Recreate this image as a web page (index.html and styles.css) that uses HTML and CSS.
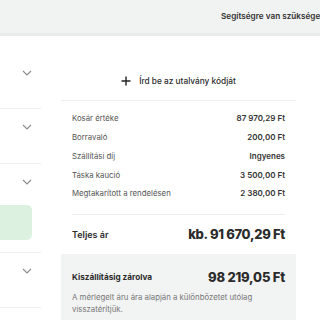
FILE: index.html
```html
<!DOCTYPE html>
<html lang="hu">
<head>
  <meta charset="UTF-8" />
  <title>Kosár</title>
  <meta name="viewport" content="width=device-width, initial-scale=1.0" />
  <link rel="stylesheet" href="styles.css">
</head>
<body>

  <header class="topbar">
    <span class="help">Segítségre van szükséged?</span>
  </header>

  <div class="layout">

    <aside class="list">
      <div class="item item-first">
        <svg class="chevron" viewBox="0 0 10 6"><path d="M1 1l4 4 4-4" /></svg>
      </div>
      <div class="item">
        <svg class="chevron" viewBox="0 0 10 6"><path d="M1 1l4 4 4-4" /></svg>
      </div>
      <div class="item item-tall">
        <svg class="chevron" viewBox="0 0 10 6"><path d="M1 1l4 4 4-4" /></svg>
        <div class="badge"></div>
      </div>
      <div class="item">
        <svg class="chevron" viewBox="0 0 10 6"><path d="M1 1l4 4 4-4" /></svg>
      </div>
      <div class="item"></div>
    </aside>

    <section class="summary">
      <button type="button" class="voucher">
        <svg class="plus" viewBox="0 0 10 10"><path d="M5 0.5v9M0.5 5h9" /></svg>
        <span>Írd be az utalvány kódját</span>
      </button>

      <dl class="rows">
        <div class="row"><dt>Kosár értéke</dt><dd>87 970,29 Ft</dd></div>
        <div class="row"><dt>Borravaló</dt><dd>200,00 Ft</dd></div>
        <div class="row"><dt>Szállítási díj</dt><dd>Ingyenes</dd></div>
        <div class="row"><dt>Táska kaució</dt><dd>3 500,00 Ft</dd></div>
        <div class="row"><dt>Megtakarított a rendelésen</dt><dd>2 380,00 Ft</dd></div>
      </dl>

      <div class="total">
        <span class="total-label">Teljes ár</span>
        <span class="total-value">kb. 91 670,29 Ft</span>
      </div>

      <div class="locked">
        <div class="locked-head">
          <span class="locked-label">Kiszállításig zárolva</span>
          <span class="locked-value">98 219,05 Ft</span>
        </div>
        <p class="locked-note">A mérlegelt áru ára alapján a különbözetet utólag visszatérítjük.</p>
      </div>
    </section>

  </div>

</body>
</html>
```

FILE: styles.css
```css
* {
  box-sizing: border-box;
}

body {
  margin: 0;
  background: #fff;
  color: #2b2b2b;
  font-family: Inter, "Noto Sans", sans-serif;
  overflow: hidden;
}

.topbar {
  display: flex;
  align-items: center;
  height: 36px;
  padding-left: 221px;
  padding-bottom: 2px;
  background: #f1f2f2;
  border-bottom: 3px solid #e9eaea;
  white-space: nowrap;
  overflow: hidden;

  .help {
    font-size: 8.2px;
    font-weight: 600;
    color: #333;
  }
}

.layout {
  display: flex;
  gap: 20px;
}

.list {
  flex: 0 0 41px;

  .item {
    height: 55px;
    border-bottom: 1px solid #efefef;
    padding-top: 15px;
  }

  .item-first {
    height: 73px;
    padding-top: 34px;
  }

  .item-tall {
    height: 89px;
  }

  .chevron {
    display: block;
    width: 10px;
    height: 6px;
    margin-left: 22px;
    fill: none;
    stroke: #8a8a8a;
    stroke-width: 1.1;
  }

  .badge {
    width: 32px;
    height: 35px;
    margin-top: 20px;
    background: #dcf1df;
    border-radius: 0 5px 5px 0;
  }
}

.summary {
  flex: 0 0 235px;
  display: flex;
  flex-direction: column;
}

.voucher {
  display: flex;
  align-items: center;
  justify-content: center;
  gap: 8px;
  height: 65px;
  padding: 25px 0 0;
  border: 0;
  border-bottom: 1px solid #eeeeee;
  background: none;
  font: inherit;
  font-size: 8.3px;
  font-weight: 500;
  color: #2b2b2b;

  .plus {
    width: 10px;
    height: 10px;
    fill: none;
    stroke: #222;
    stroke-width: 1.4;
  }
}

.rows {
  margin: 8px 11px 0;
  padding-bottom: 11px;
  border-bottom: 1px solid #eeeeee;

  .row {
    display: flex;
    justify-content: space-between;
    align-items: center;
    height: 18.75px;
  }

  dt {
    font-size: 7.8px;
    color: #555;
  }

  dd {
    margin: 0;
    font-size: 8px;
    font-weight: 600;
    color: #333;
  }
}

.total {
  display: flex;
  justify-content: space-between;
  align-items: center;
  height: 39px;
  padding: 0 11px;

  .total-label {
    font-size: 9px;
    font-weight: 600;
  }

  .total-value {
    font-size: 13px;
    font-weight: 800;
    letter-spacing: -0.3px;
  }
}

.locked {
  background: #f2f3f3;
  padding: 15px 11px 12px;

  .locked-head {
    display: flex;
    justify-content: space-between;
    align-items: center;
  }

  .locked-label {
    font-size: 8.2px;
    font-weight: 700;
    color: #2b2b2b;
  }

  .locked-value {
    font-size: 13px;
    font-weight: 800;
    letter-spacing: -0.2px;
  }

  .locked-note {
    margin: 6px 0 0;
    padding-right: 10px;
    font-size: 7.8px;
    line-height: 12px;
    color: #777;
  }
}
```
